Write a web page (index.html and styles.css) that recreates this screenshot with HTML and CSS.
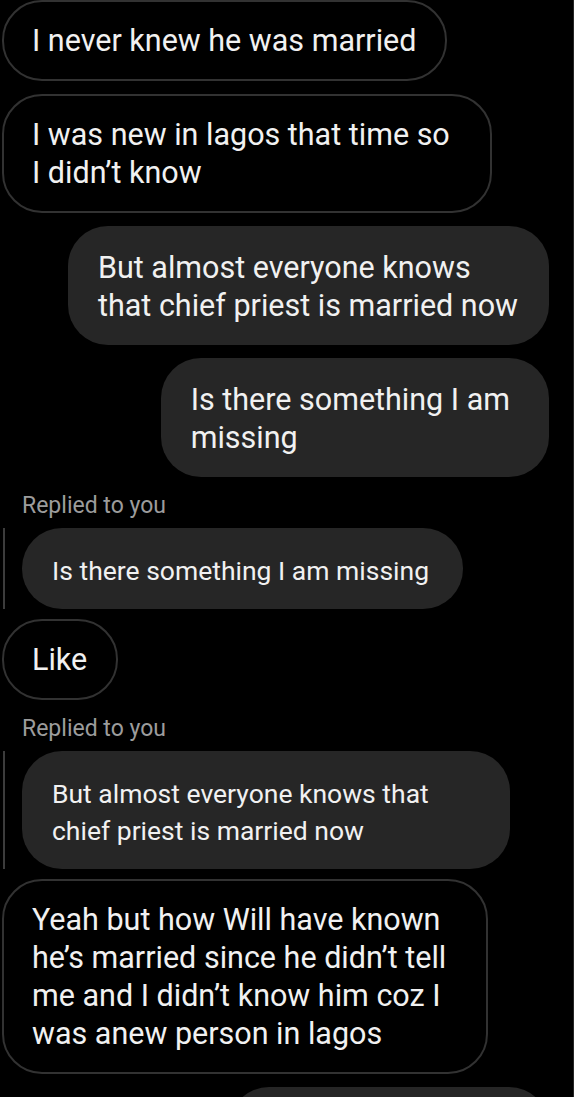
FILE: index.html
```html
<!DOCTYPE html>
<html lang="en">
<head>
  <meta charset="UTF-8" />
  <meta name="viewport" content="width=device-width, initial-scale=1.0" />
  <title>Chat</title>
  <link rel="stylesheet" href="styles.css">
</head>
<body>
  <div class="chat">
    <div class="msg in">I never knew he was married</div>
    <div class="msg in loose">I was new in lagos that time so<br>I didn’t know</div>
    <div class="msg out">But almost everyone knows<br>that chief priest is married now</div>
    <div class="msg out loose">Is there something I am<br>missing</div>

    <div class="reply">
      <div class="reply-label">Replied to you</div>
      <div class="reply-row">
        <div class="reply-bar"></div>
        <div class="quote">Is there something I am missing</div>
      </div>
    </div>

    <div class="msg in">Like</div>

    <div class="reply">
      <div class="reply-label">Replied to you</div>
      <div class="reply-row">
        <div class="reply-bar"></div>
        <div class="quote wide">But almost everyone knows that<br>chief priest is married now</div>
      </div>
    </div>

    <div class="msg in loose">Yeah but how Will have known<br>he’s married since he didn’t tell<br>me and I didn’t know him coz I<br>was anew person in lagos</div>
    <div class="msg out tail"></div>
  </div>
</body>
</html>
```

FILE: styles.css
```css
body {
  margin: 0;
  background: #000;
  color: #f1f1f1;
  font-family: Roboto, 'Noto Sans', sans-serif;
  height: 1097px;
  overflow: hidden;
  border-right: 1px solid #262626;
  box-sizing: border-box;
}
.chat {
  display: flex;
  flex-direction: column;
  align-items: flex-start;
  padding: 0 24px 0 2px;
}
.msg {
  font-size: 30.5px;
  line-height: 38px;
  padding: 23px 31px 20px 30px;
  border-radius: 40px;
  margin-bottom: 13px;
}
.msg.in {
  border: 2px solid #323232;
  padding: 20px 29px 19px 28px;
}
.msg.in.loose {
  padding-right: 40px;
}
.msg.out {
  align-self: flex-end;
  background: #262626;
}
.msg.out.loose {
  padding-right: 39px;
}
.msg.tail {
  width: 320px;
  height: 81px;
  padding: 0;
}
.reply {
  padding-left: 20px;
  margin-top: 2px;
  margin-bottom: 10px;
}
.reply-label {
  font-size: 23px;
  line-height: 28px;
  color: #9c9c9c;
  margin-bottom: 8px;
}
.reply-row {
  display: flex;
  margin-left: -19px;
  gap: 17px;
}
.reply-bar {
  width: 2px;
  background: #3c3c3c;
}
.quote {
  font-size: 26.5px;
  line-height: 37px;
  padding: 24px 34px 20px 30px;
  background: #262626;
  border-radius: 40px;
}
.quote.wide {
  padding-right: 81px;
}
```
